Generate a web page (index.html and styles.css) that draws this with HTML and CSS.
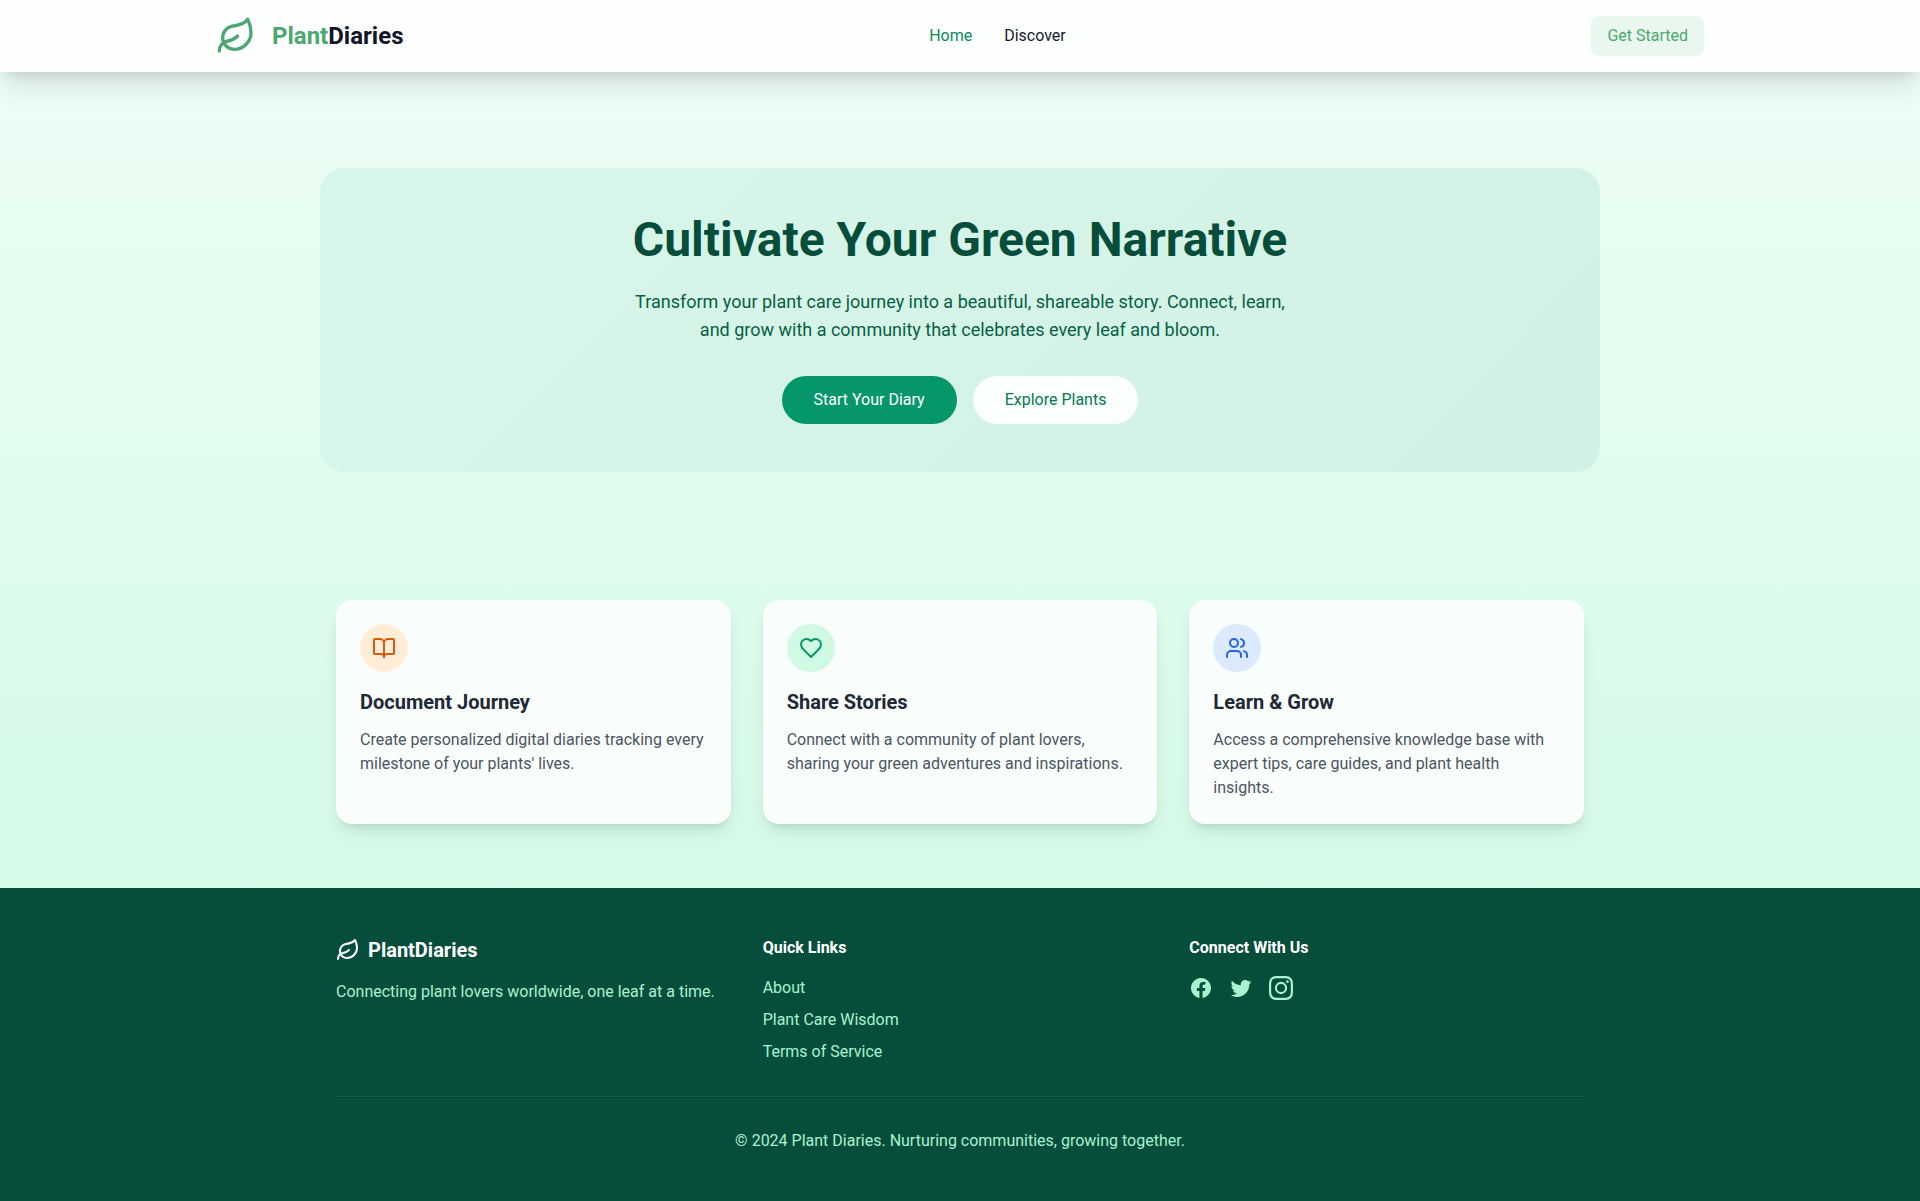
FILE: index.html
```html
<!DOCTYPE html>
<html lang="en">
<head>
<meta charset="utf-8">
<meta name="viewport" content="width=device-width, initial-scale=1">
<title>PlantDiaries</title>
<link rel="stylesheet" href="styles.css">
</head>
<body>
<header class="site-header">
  <div class="header-inner">
    <a class="brand" href="#">
      <svg class="icon icon-lg" viewBox="0 0 24 24" aria-hidden="true"><path d="M11 20A7 7 0 0 1 9.8 6.1C15.5 5 17 4.48 19 2c1 2 2 4.18 2 8 0 5.5-4.78 10-10 10Z"/><path d="M2 21c0-3 1.85-5.36 5.08-6C9.5 14.52 12 13 13 12"/></svg>
      <span class="brand-name"><span class="brand-accent">Plant</span>Diaries</span>
    </a>
    <nav class="main-nav">
      <a class="is-active" href="#">Home</a>
      <a href="#">Discover</a>
    </nav>
    <button class="get-started" type="button">Get Started</button>
  </div>
</header>

<main class="main">
  <section class="hero">
    <h1>Cultivate Your Green Narrative</h1>
    <p>Transform your plant care journey into a beautiful, shareable story. Connect, learn, and grow with a community that celebrates every leaf and bloom.</p>
    <div class="hero-actions">
      <button class="pill pill-primary" type="button">Start Your Diary</button>
      <button class="pill pill-light" type="button">Explore Plants</button>
    </div>
  </section>

  <section class="features">
    <article class="card">
      <div class="badge badge-orange">
        <svg class="icon" viewBox="0 0 24 24" aria-hidden="true"><path d="M12 7v14"/><path d="M3 18a1 1 0 0 1-1-1V4a1 1 0 0 1 1-1h5a4 4 0 0 1 4 4 4 4 0 0 1 4-4h5a1 1 0 0 1 1 1v13a1 1 0 0 1-1 1h-6a3 3 0 0 0-3 3 3 3 0 0 0-3-3z"/></svg>
      </div>
      <h3>Document Journey</h3>
      <p>Create personalized digital diaries tracking every milestone of your plants' lives.</p>
    </article>
    <article class="card">
      <div class="badge badge-green">
        <svg class="icon" viewBox="0 0 24 24" aria-hidden="true"><path d="M19 14c1.49-1.46 3-3.21 3-5.5A5.5 5.5 0 0 0 16.5 3c-1.76 0-3 .5-4.5 2-1.5-1.5-2.74-2-4.5-2A5.5 5.5 0 0 0 2 8.500c0 2.3 1.5 4.050 3 5.500l7 7Z"/></svg>
      </div>
      <h3>Share Stories</h3>
      <p>Connect with a community of plant lovers, sharing your green adventures and inspirations.</p>
    </article>
    <article class="card">
      <div class="badge badge-blue">
        <svg class="icon" viewBox="0 0 24 24" aria-hidden="true"><path d="M16 21v-2a4 4 0 0 0-4-4H6a4 4 0 0 0-4 4v2"/><circle cx="9" cy="7" r="4"/><path d="M22 21v-2a4 4 0 0 0-3-3.870"/><path d="M16 3.130a4 4 0 0 1 0 7.750"/></svg>
      </div>
      <h3>Learn &amp; Grow</h3>
      <p>Access a comprehensive knowledge base with expert tips, care guides, and plant health insights.</p>
    </article>
  </section>
</main>

<footer class="site-footer">
  <div class="footer-inner">
    <div class="footer-columns">
      <div>
        <div class="footer-brand">
          <svg class="icon" viewBox="0 0 24 24" aria-hidden="true"><path d="M11 20A7 7 0 0 1 9.8 6.1C15.5 5 17 4.480 19 2c1 2 2 4.180 2 8 0 5.500-4.780 10-10 10Z"/><path d="M2 21c0-3 1.850-5.360 5.080-6C9.500 14.520 12 13 13 12"/></svg>
          <span>PlantDiaries</span>
        </div>
        <p>Connecting plant lovers worldwide, one leaf at a time.</p>
      </div>
      <div>
        <h4>Quick Links</h4>
        <ul class="link-list">
          <li><a href="#">About</a></li>
          <li><a href="#">Plant Care Wisdom</a></li>
          <li><a href="#">Terms of Service</a></li>
        </ul>
      </div>
      <div>
        <h4>Connect With Us</h4>
        <div class="socials">
          <a href="#" aria-label="Facebook"><svg class="glyph" viewBox="0 0 24 24"><path d="M12.001 2.002c-5.522 0-9.999 4.477-9.999 9.999 0 4.990 3.656 9.126 8.437 9.879v-6.988h-2.540v-2.891h2.540V9.798c0-2.508 1.493-3.891 3.776-3.891 1.094 0 2.240.195 2.240.195v2.459h-1.264c-1.240 0-1.628.772-1.628 1.563v1.875h2.771l-.443 2.891h-2.328v6.988C18.344 21.129 22 16.992 22 12.001c0-5.522-4.477-9.999-9.999-9.999z"/></svg></a>
          <a href="#" aria-label="Twitter"><svg class="glyph" viewBox="0 0 24 24"><path d="M22.460 6c-.770.350-1.600.580-2.460.690.880-.530 1.560-1.370 1.880-2.380-.830.500-1.750.850-2.720 1.050C18.370 4.500 17.260 4 16 4c-2.350 0-4.270 1.920-4.270 4.290 0 .340.040.670.110.980C8.280 9.090 5.110 7.380 3 4.790c-.370.630-.580 1.370-.580 2.150 0 1.490.750 2.810 1.910 3.560-.710 0-1.370-.200-1.950-.500v.030c0 2.080 1.480 3.820 3.440 4.210a4.220 4.220 0 0 1-1.930.070 4.280 4.280 0 0 0 4 2.980 8.521 8.521 0 0 1-5.330 1.840c-.340 0-.680-.020-1.020-.060C3.440 20.290 5.700 21 8.120 21 16 21 20.330 14.460 20.330 8.790c0-.190 0-.370-.010-.560.840-.600 1.560-1.360 2.140-2.230z"/></svg></a>
          <a href="#" aria-label="Instagram"><svg class="glyph" viewBox="0 0 24 24"><path d="M12 2.163c3.204 0 3.584.012 4.850.070 3.252.148 4.771 1.691 4.919 4.919.058 1.265.069 1.645.069 4.849 0 3.205-.012 3.584-.069 4.849-.149 3.225-1.664 4.771-4.919 4.919-1.266.058-1.644.070-4.850.070-3.204 0-3.584-.012-4.849-.070-3.260-.149-4.771-1.699-4.919-4.920-.058-1.265-.070-1.644-.070-4.849 0-3.204.013-3.583.070-4.849.149-3.227 1.664-4.771 4.919-4.919 1.266-.057 1.645-.069 4.849-.069zM12 0C8.741 0 8.333.014 7.053.072 2.695.272.273 2.690.073 7.052.014 8.333 0 8.741 0 12c0 3.259.014 3.668.072 4.948.200 4.358 2.618 6.780 6.980 6.980C8.333 23.986 8.741 24 12 24c3.259 0 3.668-.014 4.948-.072 4.354-.200 6.782-2.618 6.979-6.980.059-1.280.073-1.689.073-4.948 0-3.259-.014-3.667-.072-4.947-.196-4.354-2.617-6.780-6.979-6.980C15.668.014 15.259 0 12 0zm0 5.838a6.162 6.162 0 1 0 0 12.324 6.162 6.162 0 0 0 0-12.324zM12 16a4 4 0 1 1 0-8 4 4 0 0 1 0 8zm6.406-11.845a1.440 1.440 0 1 0 0 2.881 1.440 1.440 0 0 0 0-2.881z"/></svg></a>
        </div>
      </div>
    </div>
    <p class="copyright">© 2024 Plant Diaries. Nurturing communities, growing together.</p>
  </div>
</footer>
</body>
</html>
```
FILE: styles.css
```css
*,
*::before,
*::after {
  box-sizing: border-box;
}

body,
h1,
h3,
h4,
p,
ul {
  margin: 0;
}

body {
  min-height: 100vh;
  display: flex;
  flex-direction: column;
  font-family: Roboto, "Liberation Sans", sans-serif;
  font-size: 16px;
  line-height: 24px;
  color: #1a1a2e;
  background: #d5fae6;
}

a {
  color: inherit;
  text-decoration: none;
}

button {
  font: inherit;
  border: 0;
  cursor: pointer;
}

.icon {
  display: block;
  width: 24px;
  height: 24px;
  fill: none;
  stroke: currentColor;
  stroke-width: 2;
  stroke-linecap: round;
  stroke-linejoin: round;
}

.icon-lg {
  width: 40px;
  height: 40px;
}

.glyph {
  display: block;
  width: 24px;
  height: 24px;
  fill: currentColor;
}

/* Header */
.site-header {
  position: relative;
  z-index: 1;
  background: #fdfffe;
  box-shadow: 0 20px 25px -5px rgba(0, 0, 0, 0.1), 0 8px 10px -6px rgba(0, 0, 0, 0.1);
}

.header-inner {
  max-width: 1536px;
  margin: 0 auto;
  padding: 16px 24px;
  display: flex;
  align-items: center;
  justify-content: space-between;
}

.brand {
  display: flex;
  align-items: center;
  gap: 16px;
}

.brand .icon,
.brand-accent {
  color: #4ca771;
}

.brand-name {
  font-size: 24px;
  line-height: 32px;
  font-weight: 700;
  color: #13132b;
}

.main-nav {
  display: flex;
  gap: 32px;
}

.main-nav .is-active {
  color: #0a8a5c;
}

.get-started {
  padding: 8px 16px;
  border-radius: 8px;
  background: #eaf7ee;
  color: #4ca771;
}

/* Main */
.main {
  flex: 1;
  padding: 96px 32px 64px;
  background: linear-gradient(to bottom, #ecfdf5, #d5fae6);
}

.hero {
  max-width: 1280px;
  margin: 0 auto 128px;
  padding: 48px;
  border-radius: 24px;
  text-align: center;
  background: linear-gradient(135deg, #d8f7ea, #d2f1e4);
}

.hero h1 {
  font-size: 48px;
  line-height: 48px;
  font-weight: 700;
  color: #064e3b;
}

.hero p {
  max-width: 672px;
  margin: 24px auto 32px;
  font-size: 18px;
  line-height: 28px;
  color: #065f46;
}

.hero-actions {
  display: flex;
  justify-content: center;
  gap: 16px;
}

.pill {
  padding: 12px 32px;
  border-radius: 24px;
}

.pill-primary {
  background: #059669;
  color: #fff;
}

.pill-light {
  background: #fbfffd;
  color: #047857;
}

.features {
  max-width: 1248px;
  margin: 0 auto;
  display: grid;
  grid-template-columns: repeat(3, 1fr);
  gap: 32px;
}

.card {
  padding: 24px;
  border-radius: 16px;
  background: #f9fefc;
  box-shadow: 0 10px 15px -3px rgba(0, 0, 0, 0.1), 0 4px 6px -4px rgba(0, 0, 0, 0.1);
}

.card h3 {
  margin: 16px 0 12px;
  font-size: 20px;
  line-height: 28px;
  font-weight: 700;
  color: #1f2937;
}

.card p {
  color: #4b5563;
}

.badge {
  width: 48px;
  height: 48px;
  border-radius: 50%;
  display: grid;
  place-items: center;
}

.badge-orange {
  background: #ffedd5;
  color: #d9580f;
}

.badge-green {
  background: #d1fae5;
  color: #059669;
}

.badge-blue {
  background: #dbeafe;
  color: #2563eb;
}

/* Footer */
.site-footer {
  padding: 48px 32px;
  background: #064e3b;
  color: #fff;
}

.footer-inner {
  max-width: 1248px;
  margin: 0 auto;
}

.footer-columns {
  display: grid;
  grid-template-columns: repeat(3, 1fr);
  gap: 32px;
}

.footer-brand {
  display: flex;
  align-items: center;
  gap: 8px;
  margin-bottom: 16px;
  font-size: 20px;
  line-height: 28px;
  font-weight: 700;
}

.footer-columns p,
.link-list,
.socials,
.copyright {
  color: #a7f3d0;
}

.footer-columns h4 {
  margin-bottom: 16px;
  font-size: 16px;
  font-weight: 700;
}

.link-list {
  padding: 0;
  list-style: none;
  display: grid;
  gap: 8px;
}

.socials {
  display: flex;
  gap: 16px;
}

.copyright {
  margin-top: 32px;
  padding-top: 32px;
  border-top: 1px solid #065f46;
  text-align: center;
}

@media (max-width: 900px) {
  .features,
  .footer-columns {
    grid-template-columns: 1fr;
  }
}
```
